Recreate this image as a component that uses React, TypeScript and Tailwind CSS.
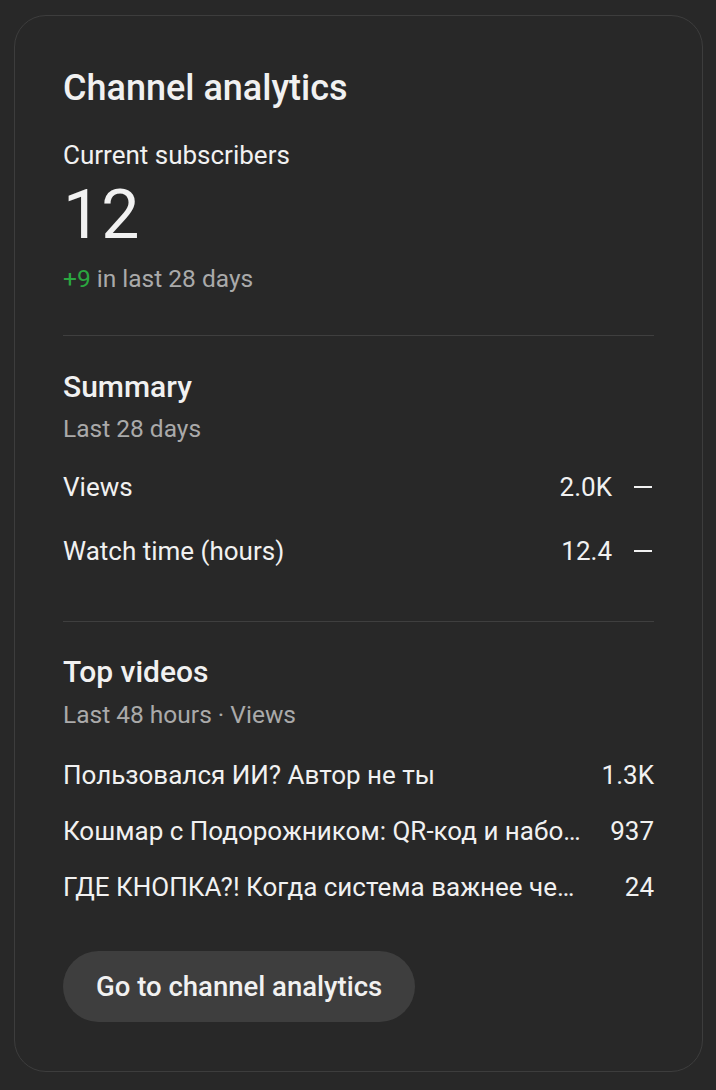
export default function App() {
  const topVideos = [
    { id: 1, title: "Пользовался ИИ? Автор не ты", views: "1.3K" },
    { id: 2, title: "Кошмар с Подорожником: QR-код и набор номера", views: "937" },
    { id: 3, title: "ГДЕ КНОПКА?! Когда система важнее человека", views: "24" },
  ]

  const summary = [
    { label: "Views", value: "2.0K" },
    { label: "Watch time (hours)", value: "12.4" },
  ]

  return (
    <main className="min-h-screen bg-[#282828] pt-[15px] pb-[18px] font-['Roboto',sans-serif] text-[#f1f1f1]">
      <div className="ml-[14px] w-[689px] rounded-[32px] border border-[#3d3d3d] px-[48px] pt-[50px] pb-[49px]">
        {/* Subscribers */}
        <h1 className="text-[36px] leading-[44px] font-medium">Channel analytics</h1>
        <p className="mt-[29px] text-[26px] leading-[32px]">Current subscribers</p>
        <p className="mt-[6px] text-[68px] leading-[76px]">12</p>
        <p className="mt-[10px] text-[24.5px] leading-[32px] text-[#aaaaaa]">
          <span className="text-[#2ba640]">+9</span> in last 28 days
        </p>

        <div className="mt-[40px] h-px bg-[#3f3f3f]" />

        {/* Summary */}
        <h2 className="mt-[32px] text-[30px] leading-[38px] font-medium">Summary</h2>
        <p className="mt-[7px] text-[24.5px] leading-[32px] text-[#aaaaaa]">Last 28 days</p>
        <div className="mt-[26px] flex flex-col gap-[32px]">
          {summary.map((row) => (
            <div key={row.label} className="flex items-center text-[26px] leading-[32px]">
              <span className="flex-1">{row.label}</span>
              <span>{row.value}</span>
              <span className="ml-[22px] mr-[2px] h-[2px] w-[18px] bg-[#f1f1f1]" />
            </div>
          ))}
        </div>

        <div className="mt-[54px] h-px bg-[#3f3f3f]" />

        {/* Top videos */}
        <h2 className="mt-[31px] text-[30px] leading-[38px] font-medium">Top videos</h2>
        <p className="mt-[8px] text-[24.5px] leading-[32px] text-[#aaaaaa]">Last 48 hours · Views</p>
        <div className="mt-[28px] flex flex-col gap-[24px]">
          {topVideos.map((video) => (
            <div key={video.id} className="flex items-center gap-[20px] text-[26px] leading-[32px]">
              <span className="min-w-0 flex-1 truncate">{video.title}</span>
              <span className="w-[53px] shrink-0 text-right">{video.views}</span>
            </div>
          ))}
        </div>

        <button className="mt-[48px] flex h-[71px] items-center rounded-full bg-[#3e3e3e] px-[33px] text-[27.5px] font-medium text-[#f1f1f1]">
          Go to channel analytics
        </button>
      </div>
    </main>
  )
}
